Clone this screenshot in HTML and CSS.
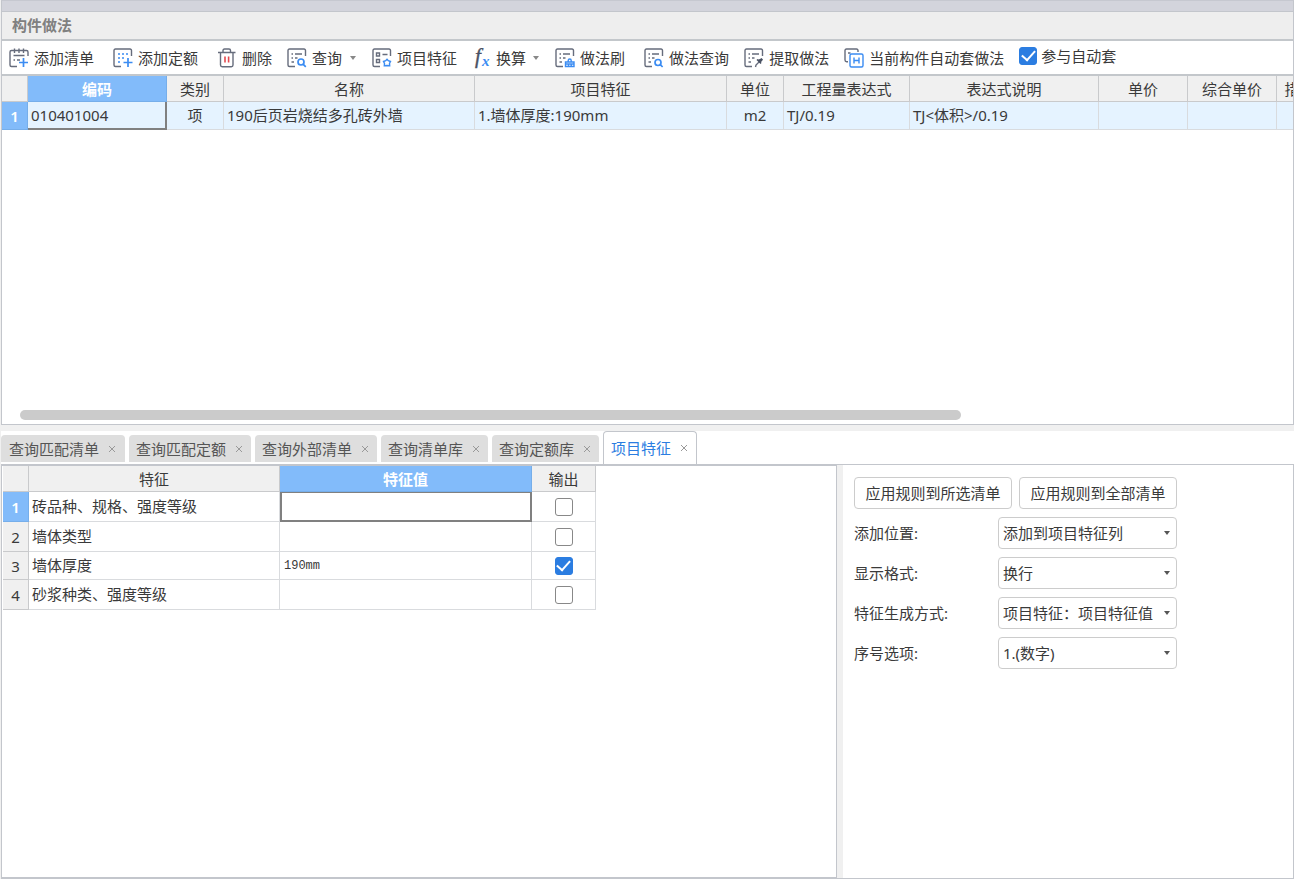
FILE: index.html
```html
<!DOCTYPE html>
<html lang="zh-CN">
<head>
<meta charset="utf-8">
<title>构件做法</title>
<link rel="stylesheet" href="styles.css">
</head>
<body>
<main class="app">
  <section class="upper">
    <div class="strip"></div>
    <h1 class="title">构件做法</h1>
    <div class="toolbar">
      <button class="tool wide"><svg class="icon" viewBox="0 0 20 20"><path class="g" d="M1 11V4q0-1.500 1.500-1.500h15Q19 2.500 19 4v4M1 11v6q0 1.500 1.500 1.500H8M5.500.5V5M10 .5V5M14.500.5V5M4.500 7.500h11M4.500 12H6M8 12h3"/><path class="b thick" d="M14.500 10v9M10 14.500h9"/></svg>添加清单</button>
      <button class="tool wide"><svg class="icon" viewBox="0 0 20 20"><path class="g" d="M18.500 8V2.500Q18.500 1 17 1H2.500Q1 1 1 2.500V17q0 1.500 1.500 1.500H8"/><path class="b dot" d="M5 6h10.500M5 10h6.500M5 14h4"/><path class="b thick" d="M15 10v9M10.500 14.500h9"/></svg>添加定额</button>
      <button class="tool"><svg class="icon" viewBox="0 0 20 20"><path class="g" d="M1 4.500h17.500M6 4.500V2.500Q6 1 7.500 1H12q1.500 0 1.500 1.500v2M3.500 4.500V17q0 1.700 1.700 1.700h9.100q1.700 0 1.700-1.700V4.500"/><path class="r" d="M8 8.500v6M11.600 8.500v6"/></svg>删除</button>
      <button class="tool"><svg class="icon" viewBox="0 0 20 20"><path class="g" d="M18.500 8V2.500Q18.500 1 17 1H2.500Q1 1 1 2.500V17q0 1.500 1.500 1.500H8M4.500 6H6M8 6h7M4.500 10H6M8 10h2.500M4.500 14H7"/><circle class="b thick" cx="14" cy="14" r="3"/><path class="b thick" d="M16.300 16.300l2.500 2.500"/></svg>查询<span class="caret"></span></button>
      <button class="tool"><svg class="icon" viewBox="0 0 20 20"><path class="g" d="M18.500 8V2.500Q18.500 1 17 1H2.500Q1 1 1 2.500V17q0 1.500 1.500 1.500H8M4.500 5h3v3h-3zM10.500 6.500h5M4.500 11.500h3v3h-3z"/><path class="b" d="M15 11.200l1.300 1.500 2.200.8-1 2 .2 2.300-2.700-.3-2.700.3.200-2.300-1-2 2.200-.8z"/></svg>项目特征</button>
      <button class="tool formula"><svg class="icon" viewBox="0 0 20 20"><text class="fn" x="3" y="15">f</text><text class="var" x="10" y="18">x</text></svg>换算<span class="caret"></span></button>
      <button class="tool wide"><svg class="icon" viewBox="0 0 20 20"><path class="g" d="M18.500 8V2.500Q18.500 1 17 1H2.500Q1 1 1 2.500V17q0 1.500 1.500 1.500H8M4.500 6H6M8 6h7M4.500 10H6M8 10h2.500M4.500 14H7"/><path class="b" d="M10.500 18.500V14H19v4.500zM13.200 14v-1.500q0-1.500 1.500-1.500t1.500 1.500V14M13.500 16.500v2M16.200 16.500v2M10.500 16H19"/></svg>做法刷</button>
      <button class="tool"><svg class="icon" viewBox="0 0 20 20"><path class="g" d="M18.500 8V2.500Q18.500 1 17 1H2.500Q1 1 1 2.500V17q0 1.500 1.500 1.500H8M4.500 6H6M8 6h7M4.500 10H6M8 10h2.500M4.500 14H7"/><circle class="b thick" cx="14" cy="14.500" r="3"/><path class="b thick" d="M16.300 16.700l2.300 2.300"/></svg>做法查询</button>
      <button class="tool"><svg class="icon" viewBox="0 0 20 20"><path class="g" d="M18.500 8V2.500Q18.500 1 17 1H2.500Q1 1 1 2.500V17q0 1.500 1.500 1.500H8M4.500 6H6M8 6h7M4.500 10H6M8 10h2.500M4.500 14H7M11.500 19l.5-2 3.500-3.500"/><path class="f" d="M16 11l1.500-1 1.500 1.500-1 1.500-1 1 .5 1-1 1-4-4 1-1 1 .5z"/></svg>提取做法</button>
      <button class="tool"><svg class="icon" viewBox="0 0 20 20"><path class="g" d="M14 4V2.500Q14 1 12.500 1h-10Q1 1 1 2.500v9.500q0 1.700 1.700 1.700H4M4 5h2.500"/><rect class="b" x="6" y="6" width="13" height="13" rx="1.500"/><path class="b" d="M10 9.500v6M15 9.500v6M10 12.500h5"/></svg>当前构件自动套做法</button>
      <label class="auto"><input class="check" type="checkbox" checked>参与自动套</label>
    </div>
    <div class="list">
      <table class="grid items">
        <colgroup><col class="c26"><col class="c139"><col class="c57"><col class="c251"><col class="c252"><col class="c57"><col class="c126"><col class="c189"><col class="c89"><col class="c89"><col class="c76"></colgroup>
        <thead><tr><th></th><th class="on">编码</th><th>类别</th><th>名称</th><th>项目特征</th><th>单位</th><th>工程量表达式</th><th>表达式说明</th><th>单价</th><th>综合单价</th><th>措施项目</th></tr></thead>
        <tbody><tr><th class="on" scope="row">1</th><td class="current">010401004</td><td class="mid">项</td><td>190后页岩烧结多孔砖外墙</td><td>1.墙体厚度:190mm</td><td class="mid">m2</td><td>TJ/0.19</td><td>TJ&lt;体积&gt;/0.19</td><td></td><td></td><td></td></tr></tbody>
      </table>
      <div class="scroll"><div class="thumb"></div></div>
    </div>
  </section>
  <section class="lower">
    <div class="tabs" role="tablist">
      <button class="tab" role="tab">查询匹配清单<svg class="x" viewBox="0 0 10 10"><path d="M2 2l6 6M8 2l-6 6"/></svg></button>
      <button class="tab" role="tab">查询匹配定额<svg class="x" viewBox="0 0 10 10"><path d="M2 2l6 6M8 2l-6 6"/></svg></button>
      <button class="tab" role="tab">查询外部清单<svg class="x" viewBox="0 0 10 10"><path d="M2 2l6 6M8 2l-6 6"/></svg></button>
      <button class="tab" role="tab">查询清单库<svg class="x" viewBox="0 0 10 10"><path d="M2 2l6 6M8 2l-6 6"/></svg></button>
      <button class="tab" role="tab">查询定额库<svg class="x" viewBox="0 0 10 10"><path d="M2 2l6 6M8 2l-6 6"/></svg></button>
      <button class="tab active" role="tab" aria-selected="true">项目特征<svg class="x" viewBox="0 0 10 10"><path d="M2 2l6 6M8 2l-6 6"/></svg></button>
    </div>
    <div class="panes">
      <div class="features">
        <table class="grid traits">
          <colgroup><col class="c26"><col class="c251"><col class="c252"><col class="c64"></colgroup>
          <thead><tr><th></th><th>特征</th><th class="on">特征值</th><th>输出</th></tr></thead>
          <tbody>
            <tr><th class="on" scope="row">1</th><td>砖品种、规格、强度等级</td><td class="current box"></td><td class="mid"><input class="check" type="checkbox" aria-label="输出 1"></td></tr>
            <tr><th scope="row">2</th><td>墙体类型</td><td></td><td class="mid"><input class="check" type="checkbox" aria-label="输出 2"></td></tr>
            <tr class="short"><th scope="row">3</th><td>墙体厚度</td><td class="mono">190mm</td><td class="mid"><input class="check" type="checkbox" aria-label="输出 3" checked></td></tr>
            <tr><th scope="row">4</th><td>砂浆种类、强度等级</td><td></td><td class="mid"><input class="check" type="checkbox" aria-label="输出 4"></td></tr>
          </tbody>
        </table>
      </div>
      <form class="options">
        <div class="row buttons"><button class="apply" type="button">应用规则到所选清单</button><button class="apply" type="button">应用规则到全部清单</button></div>
        <div class="row"><label for="place">添加位置:</label><span class="pick"><select id="place"><option>添加到项目特征列</option></select></span></div>
        <div class="row"><label for="format">显示格式:</label><span class="pick"><select id="format"><option>换行</option></select></span></div>
        <div class="row"><label for="mode">特征生成方式:</label><span class="pick"><select id="mode"><option>项目特征：项目特征值</option></select></span></div>
        <div class="row"><label for="number">序号选项:</label><span class="pick"><select id="number"><option>1.(数字)</option></select></span></div>
      </form>
    </div>
  </section>
</main>
</body>
</html>
```

FILE: styles.css
```css
* { box-sizing: border-box; }

body {
  margin: 0;
  background: #fff;
  color: #3a3a3a;
  font: 15px/20px "Noto Sans", "Noto Sans CJK SC", sans-serif;
}

button, select, input {
  margin: 0;
  color: inherit;
  font: inherit;
}

.app {
  display: grid;
  grid-template-rows: minmax(0, 425fr) minmax(0, 448fr);
  gap: 6px;
  height: 100vh;
  padding-left: 1px;
  background: #f0f0f0;
}

.upper, .lower {
  display: flex;
  flex-direction: column;
  min-width: 0;
  background: #fff;
}

.upper {
  border: 1px solid #c3c6cc;
  border-top-color: #c6c8d0;
}

.strip {
  height: 11px;
  background: #d3d4dc;
  border-bottom: 1px solid #c3c6cc;
}

.title {
  margin: 0;
  padding: 3px 10px 4px;
  background: #eee;
  border-bottom: 2px solid #c3c7cb;
  color: #808080;
  font-size: 15px;
  font-weight: 600;
  line-height: 20px;
}

.toolbar {
  display: flex;
  align-items: center;
  gap: 15px;
  height: 35px;
  padding: 0 7px 2px;
  border-bottom: 2px solid #c3c7cb;
  white-space: nowrap;
  overflow: hidden;
}

.tool {
  display: flex;
  flex: none;
  align-items: center;
  gap: 5px;
  padding: 2px 0 0;
  border: 0;
  background: none;
}

.wide { margin-right: 4px; }
.formula { gap: 4px; }

.icon {
  width: 20px;
  height: 20px;
  fill: none;
  stroke-width: 1.4;
  overflow: visible;
}

.g { stroke: #666c7c; }
.b { stroke: #3b8cf2; }
.r { stroke: #e4494f; stroke-width: 1.6; }
.f { fill: #4a5264; }
.thick { stroke-width: 1.7; }
.dot { stroke-dasharray: 2 2; }

.fn, .var {
  font-family: "Liberation Serif", serif;
  font-style: italic;
}

.fn { fill: #4a5264; stroke: #4a5264; stroke-width: 0.4; font-size: 21px; }
.var { fill: #3b8cf2; font-size: 15px; font-weight: 700; }

.caret {
  margin: 0 1px 0 3px;
  border: 3px solid transparent;
  border-top: 4px solid #888;
  border-bottom: 0;
}

.auto {
  display: flex;
  flex: none;
  align-items: center;
  gap: 4px;
  padding-bottom: 2px;
}

.check {
  display: grid;
  place-items: center;
  width: 18px;
  height: 18px;
  border: 1px solid #888;
  border-radius: 3px;
  background: #fff;
  appearance: none;
}

.check:checked {
  border-color: #2b7de1;
  background: #2b7de1;
}

.check:checked::after {
  content: "";
  width: 11px;
  height: 6px;
  margin-bottom: 4px;
  border: solid #fff;
  border-width: 0 0 2px 2px;
  rotate: -48deg;
}

.list {
  display: flex;
  flex: 1;
  flex-direction: column;
  min-height: 0;
  overflow: hidden;
}

.grid {
  border-spacing: 0;
  table-layout: fixed;
}

.grid th, .grid td {
  padding: 0 3px 1px;
  border: solid #d9dbde;
  border-width: 0 1px 1px 0;
  overflow: hidden;
  white-space: nowrap;
  text-align: left;
}

.grid th {
  height: 26px;
  padding: 0;
  border-color: #c9cacc;
  background: #f0f0f0;
  font-weight: 400;
  text-align: center;
}

.grid th.on {
  border-color: #76aeea;
  background: #82bbfa;
  color: #fff;
  font-weight: 600;
}

.grid .mid { padding-bottom: 0; text-align: center; }
.mid .check { margin: 0 auto; }

.items { width: 1351px; }
.items td, .items .mid { height: 28px; padding-bottom: 1px; background: #e5f3ff; }

.grid .current {
  border: solid #808080;
  border-width: 0 2px 2px 0;
}

.grid .box { border-width: 1px 2px 2px; }

.traits { width: 593px; }
.traits td { height: 30px; }
.traits .short td { height: 28px; }
.traits .mono { padding: 0 4px; font: 12px/20px "Liberation Mono", monospace; }

.c26 { width: 26px; }
.c57 { width: 57px; }
.c64 { width: 64px; }
.c76 { width: 76px; }
.c89 { width: 89px; }
.c126 { width: 126px; }
.c139 { width: 139px; }
.c189 { width: 189px; }
.c251 { width: 251px; }
.c252 { width: 252px; }

.scroll {
  margin-top: auto;
  padding: 0 18px 4px;
}

.thumb {
  width: 75%;
  height: 10px;
  border-radius: 5px;
  background: #cbcbcb;
}

.tabs {
  display: flex;
  align-items: flex-end;
  gap: 4px;
  height: 33px;
}

.tab {
  display: flex;
  align-items: center;
  gap: 8px;
  height: 27px;
  margin-bottom: 2px;
  padding: 0 7px;
  border: 0;
  border-radius: 4px 4px 0 0;
  background: #dedede;
  color: #555;
  white-space: nowrap;
}

.tab:first-child { padding: 0 8px; }

.tab.active {
  height: 33px;
  margin-bottom: 0;
  border: 1px solid #c3c6cc;
  border-bottom: 0;
  background: #fff;
  color: #2b7de1;
}

.x {
  width: 10px;
  height: 10px;
  fill: none;
  stroke: #999;
}

.panes {
  display: flex;
  flex: 1;
  min-height: 0;
  border: 1px solid #c3c6cc;
  background: #f0f0f0;
}

.features {
  flex: 1;
  min-width: 0;
  margin-right: 6px;
  padding-left: 1px;
  border: solid #c3c6cc;
  border-width: 1px 1px 1px 0;
  background: #fff;
  overflow: hidden;
}

.options {
  display: flex;
  flex-direction: column;
  gap: 8px;
  width: 450px;
  padding: 12px 11px;
  background: #fff;
}

.row {
  display: flex;
  align-items: center;
  justify-content: space-between;
  width: 323px;
}

.apply {
  width: 158px;
  height: 32px;
  padding: 0;
  border: 1px solid #ccc;
  border-radius: 4px;
  background: #fff;
}

.pick {
  position: relative;
  width: 179px;
}

.pick select {
  display: block;
  width: 100%;
  height: 32px;
  padding: 0 4px;
  border: 1px solid #ccc;
  border-radius: 4px;
  background: #fff;
  appearance: none;
}

.pick::after {
  content: "";
  position: absolute;
  top: 14px;
  right: 7px;
  border: 3px solid transparent;
  border-top: 4px solid #555;
  border-bottom: 0;
  pointer-events: none;
}
```
